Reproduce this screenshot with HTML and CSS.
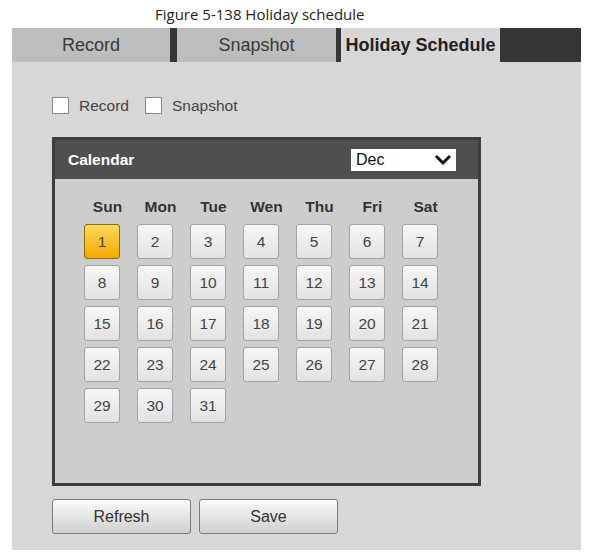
FILE: index.html
```html
<!DOCTYPE html>
<html>
<head>
<meta charset="utf-8">
<link rel="stylesheet" href="styles.css">
</head>
<body>
<div class="caption">Figure 5-138 Holiday schedule</div>
<div class="frame">
  <div class="tabs">
    <div class="tab tab-record">Record</div>
    <div class="tab tab-snap">Snapshot</div>
    <div class="tab tab-active">Holiday Schedule</div>
  </div>
  <div class="content">
    <div class="checks">
      <span class="box"></span><span class="lbl">Record</span>
      <span class="box"></span><span class="lbl">Snapshot</span>
    </div>
    <div class="panel">
      <div class="panel-head">
        <span class="title">Calendar</span>
        <div class="select">
          <span>Dec</span>
          <svg width="20" height="12" viewBox="0 0 20 12"><path d="M3 2 L10 9 L17 2" fill="none" stroke="#111" stroke-width="3"/></svg>
        </div>
      </div>
      <div class="panel-body">
        <div class="grid">
          <div class="dh">Sun</div><div class="dh">Mon</div><div class="dh">Tue</div><div class="dh">Wen</div><div class="dh">Thu</div><div class="dh">Fri</div><div class="dh">Sat</div>
          <div class="day sel">1</div><div class="day">2</div><div class="day">3</div><div class="day">4</div><div class="day">5</div><div class="day">6</div><div class="day">7</div>
          <div class="day">8</div><div class="day">9</div><div class="day">10</div><div class="day">11</div><div class="day">12</div><div class="day">13</div><div class="day">14</div>
          <div class="day">15</div><div class="day">16</div><div class="day">17</div><div class="day">18</div><div class="day">19</div><div class="day">20</div><div class="day">21</div>
          <div class="day">22</div><div class="day">23</div><div class="day">24</div><div class="day">25</div><div class="day">26</div><div class="day">27</div><div class="day">28</div>
          <div class="day">29</div><div class="day">30</div><div class="day">31</div>
        </div>
      </div>
    </div>
    <div class="actions">
      <div class="btn">Refresh</div>
      <div class="btn">Save</div>
    </div>
  </div>
</div>
</body>
</html>
```

FILE: styles.css
```css
* { box-sizing: border-box; }
html, body { margin: 0; padding: 0; background: #fff; }
body { font-family: "Liberation Sans", Arial, sans-serif; }

.caption {
  height: 28px;
  padding-left: 155px;
  padding-top: 4px;
  font-family: "Open Sans", "Noto Sans", sans-serif;
  font-size: 15px;
  color: #222;
  line-height: 20px;
}

.frame {
  margin-left: 12px;
  width: 569px;
  height: 522px;
  background: #d7d7d7;
}

.tabs {
  display: flex;
  height: 34px;
  background: #363636;
}
.tab {
  height: 34px;
  line-height: 34px;
  text-align: center;
  font-size: 18px;
  color: #3a3a3a;
  background: #bdbdbd;
}
.tab-record { width: 158px; }
.tab-snap { width: 159px; margin-left: 7px; }
.tab-active { width: 159px; margin-left: 5px; background: #d7d7d7; font-weight: bold; color: #222; }

.content { padding: 35px 0 0 40px; }

.checks {
  display: flex;
  align-items: center;
  height: 17px;
  font-size: 15.5px;
  color: #444;
}
.box {
  width: 17px;
  height: 17px;
  background: #fff;
  border: 1px solid #8a8a8a;
}
.lbl { margin-left: 10px; margin-right: 16px; }

.panel {
  margin-top: 23px;
  width: 429px;
  height: 349px;
  border: 3px solid #3d3d3d;
  display: flex;
  flex-direction: column;
}
.panel-head {
  height: 39px;
  background: #4f4f4f;
  display: flex;
  align-items: center;
  justify-content: space-between;
  padding: 0 22px 0 13px;
}
.title { color: #fff; font-weight: bold; font-size: 15.5px; }
.select {
  width: 105px;
  height: 22px;
  background: #fff;
  display: flex;
  align-items: center;
  justify-content: space-between;
  padding: 0 3px 0 5px;
  font-size: 16px;
  color: #111;
}
.panel-body {
  flex: 1;
  background: #cdcdcd;
  padding: 16px 0 0 26px;
}
.grid {
  display: grid;
  grid-template-columns: repeat(7, 53px);
  grid-template-rows: 23px repeat(5, 35px);
  row-gap: 6px;
}
.dh {
  text-align: center;
  font-weight: bold;
  font-size: 15.5px;
  color: #333;
  line-height: 23px;
}
.day {
  margin-left: 3px;
  width: 36px;
  height: 35px;
  border: 1px solid #a3a3a3;
  border-radius: 3px;
  background: linear-gradient(#f7f7f7, #e2e2e2);
  text-align: center;
  line-height: 33px;
  font-size: 15.5px;
  color: #444;
}
.day.sel {
  background: linear-gradient(#ffd85a, #f3a900);
  border-color: #8d6d10;
}

.actions {
  display: flex;
  gap: 8px;
  margin-top: 13px;
}
.btn {
  width: 139px;
  height: 35px;
  border: 1px solid #7b7b7b;
  border-radius: 3px;
  background: linear-gradient(#fbfbfb, #dcdcdc 70%, #cfcfcf);
  text-align: center;
  line-height: 33px;
  font-size: 16px;
  color: #333;
}
```
